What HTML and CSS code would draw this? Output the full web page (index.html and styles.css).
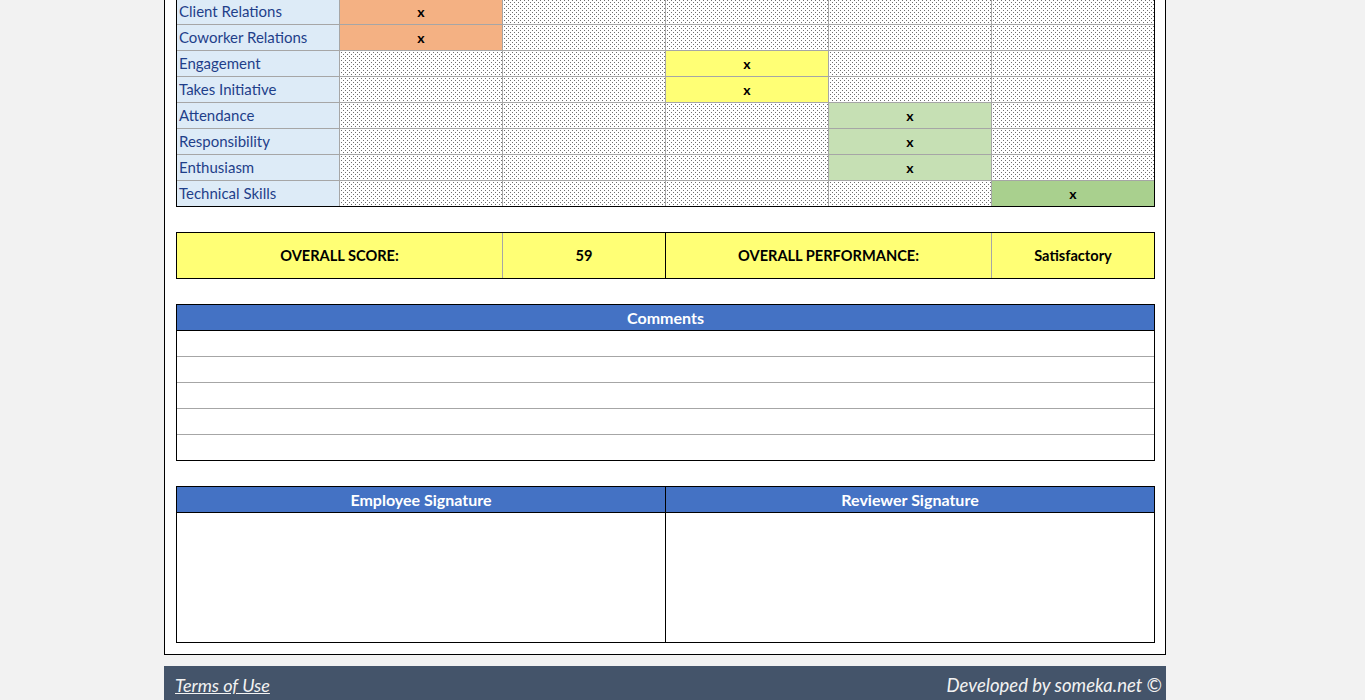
FILE: index.html
```html
<!DOCTYPE html>
<html>
<head>
<meta charset="utf-8">
<link rel="stylesheet" href="styles.css">
</head>
<body>
<div class="sheet">
  <div class="grid">
    <div class="lbl">Client Relations</div><div class="c orange">x</div><div class="c dot"></div><div class="c dot"></div><div class="c dot"></div><div class="c dot"></div>
    <div class="lbl">Coworker Relations</div><div class="c orange">x</div><div class="c dot"></div><div class="c dot"></div><div class="c dot"></div><div class="c dot"></div>
    <div class="lbl">Engagement</div><div class="c dot"></div><div class="c dot"></div><div class="c yellow">x</div><div class="c dot"></div><div class="c dot"></div>
    <div class="lbl">Takes Initiative</div><div class="c dot"></div><div class="c dot"></div><div class="c yellow">x</div><div class="c dot"></div><div class="c dot"></div>
    <div class="lbl">Attendance</div><div class="c dot"></div><div class="c dot"></div><div class="c dot"></div><div class="c green">x</div><div class="c dot"></div>
    <div class="lbl">Responsibility</div><div class="c dot"></div><div class="c dot"></div><div class="c dot"></div><div class="c green">x</div><div class="c dot"></div>
    <div class="lbl">Enthusiasm</div><div class="c dot"></div><div class="c dot"></div><div class="c dot"></div><div class="c green">x</div><div class="c dot"></div>
    <div class="lbl">Technical Skills</div><div class="c dot"></div><div class="c dot"></div><div class="c dot"></div><div class="c dot"></div><div class="c dgreen">x</div>
  </div>

  <div class="score">
    <div class="s s-gray">OVERALL SCORE:</div>
    <div class="s s-black">59</div>
    <div class="s s-gray">OVERALL PERFORMANCE:</div>
    <div class="s">Satisfactory</div>
  </div>

  <div class="comments">
    <div class="hdr">Comments</div>
    <div class="line"></div>
    <div class="line"></div>
    <div class="line"></div>
    <div class="line"></div>
    <div class="line"></div>
  </div>

  <div class="sig">
    <div class="sigcol sigcol-left">
      <div class="hdr">Employee Signature</div>
      <div class="sigbody"></div>
    </div>
    <div class="sigcol">
      <div class="hdr">Reviewer Signature</div>
      <div class="sigbody"></div>
    </div>
  </div>
</div>
<div class="footer">
  <a class="terms" href="#">Terms of Use</a>
  <span class="dev">Developed by someka.net ©</span>
</div>
</body>
</html>
```

FILE: styles.css
```css
* { box-sizing: border-box; }
html, body { margin: 0; padding: 0; }
body {
  background: #f2f2f2;
  font-family: Lato, "Liberation Sans", sans-serif;
  overflow: hidden;
}
.sheet {
  width: 1002px;
  margin: -3px 0 0 164px;
  background: #fff;
  border: 1px solid #000;
  padding: 0 10px 11px 11px;
}
.grid {
  display: grid;
  grid-template-columns: repeat(6, 162px);
  grid-auto-rows: 25px;
  gap: 1px;
  background: #a6a6a6;
  border: 1px solid #000;
}
.lbl {
  background: #ddebf7;
  color: #1f3f8a;
  font-size: 15px;
  padding-left: 2px;
  padding-bottom: 1px;
  display: flex;
  align-items: center;
}
.c {
  display: flex;
  align-items: center;
  justify-content: center;
  font-weight: 700;
  font-size: 14px;
  color: #000;
  padding-bottom: 1px;
}
.dot {
  background-color: #fff;
  background-image:
    conic-gradient(at 1px 1px, transparent 75%, #6e6e6e 0),
    conic-gradient(at 1px 1px, transparent 75%, #6e6e6e 0);
  background-size: 4px 4px, 4px 4px;
  background-position: 1px 1px, 3px 3px;
}
.orange { background: #f4b183; }
.yellow { background: #ffff75; }
.green { background: #c6e0b4; }
.dgreen { background: #a9d08e; }

.score {
  margin-top: 25px;
  display: grid;
  grid-template-columns: 326px 163px 326px 162px;
  height: 47px;
  border: 1px solid #000;
  background: #ffff75;
}
.s {
  display: flex;
  align-items: center;
  justify-content: center;
  font-weight: 700;
  font-size: 14.6px;
  color: #000;
}
.s-gray { border-right: 1px solid #a6a6a6; }
.s-black { border-right: 1px solid #000; }

.hdr {
  height: 26px;
  background: #4472c4;
  color: #fff;
  font-weight: 700;
  font-size: 16px;
  border-bottom: 1px solid #000;
  display: flex;
  align-items: center;
  justify-content: center;
}
.comments {
  margin-top: 25px;
  border: 1px solid #000;
}
.line {
  height: 26px;
  border-bottom: 1px solid #a6a6a6;
}
.line:last-child {
  height: 25px;
  border-bottom: none;
}
.sig {
  margin-top: 25px;
  border: 1px solid #000;
  display: grid;
  grid-template-columns: 489px 488px;
}
.sigcol-left { border-right: 1px solid #000; }
.sigbody { height: 129px; }

.footer {
  width: 1002px;
  margin: 11px 0 0 164px;
  height: 40px;
  background: #44546a;
  display: flex;
  justify-content: space-between;
  align-items: flex-start;
  padding: 8px 4px 0 11px;
  font-style: italic;
  font-size: 18.5px;
  color: #f2f2f2;
}
.terms { color: #f2f2f2; text-decoration: underline; font-size: 18px; }
.dev { color: #f2f2f2; }
```
